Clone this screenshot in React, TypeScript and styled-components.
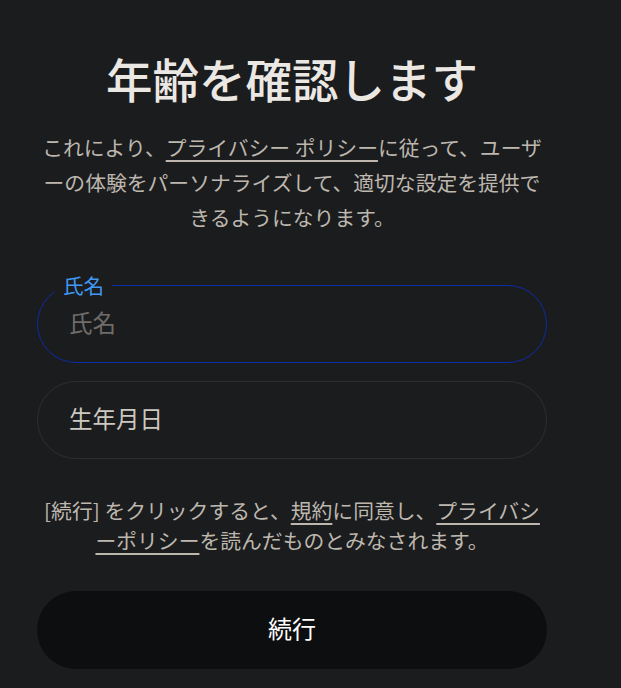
import React from 'react';
import styled, { createGlobalStyle } from 'styled-components';

const GlobalStyle = createGlobalStyle`
  html, body { margin: 0; padding: 0; background: #1b1c1e; }
  body { font-family: "Noto Sans CJK JP", "Noto Sans", sans-serif; color: #e9e6e2; }
  * { box-sizing: border-box; }
`;

const Page = styled.main`
  min-height: 688px;
  padding: 49px 0 0 37px;
`;

const Column = styled.div`
  width: 510px;
  display: flex;
  flex-direction: column;
`;

const Title = styled.h1`
  margin: 0;
  font-size: 46.5px;
  line-height: 58px;
  font-weight: 500;
  text-align: center;
  color: #ebe8e4;
`;

const Lead = styled.p<{ $lh: number; $mt: number }>`
  margin: ${p => p.$mt}px 0 0;
  font-size: 20.8px;
  line-height: ${p => p.$lh}px;
  text-align: center;
  color: #bdb7ae;
  line-break: loose;
`;

const Link = styled.a`
  color: inherit;
  text-decoration: underline;
  text-decoration-thickness: 1.5px;
  text-underline-offset: 4px;
  cursor: pointer;
`;

const Field = styled.label<{ $focused?: boolean; $mt: number }>`
  position: relative;
  display: flex;
  align-items: center;
  height: 78px;
  margin-top: ${p => p.$mt}px;
  border: 1px solid ${p => (p.$focused ? '#0d2ca6' : '#2c2e31')};
  border-radius: 39px;
`;

const FloatLabel = styled.span`
  position: absolute;
  top: -12px;
  left: 17px;
  padding: 0 8px;
  font-size: 20.6px;
  line-height: 22px;
  color: #3f98f2;
  background: #1b1c1e;
`;

const Input = styled.input<{ $strong?: boolean }>`
  width: 100%;
  height: 100%;
  padding: 0 31px 4px;
  border: none;
  outline: none;
  background: transparent;
  font-family: inherit;
  font-size: 23.5px;
  color: #d4cfc7;
  &::placeholder {
    color: ${p => (p.$strong ? '#cdc8c0' : '#6f6d6a')};
  }
`;

const Button = styled.button`
  margin-top: 36px;
  height: 78px;
  padding: 0 0 6px;
  border: none;
  border-radius: 39px;
  background: #0d0e10;
  color: #ffffff;
  font-family: inherit;
  font-size: 24px;
  cursor: pointer;
`;

export default function App() {
  return (
    <>
      <GlobalStyle />
      <Page>
        <Column>
          <Title>年齢を確認します</Title>
          <Lead $lh={35} $mt={23}>
            これにより、<Link>プライバシー ポリシー</Link>に従って、ユーザーの体験をパーソナライズして、適切な設定を提供できるようになります。
          </Lead>
          <Field $focused $mt={50}>
            <FloatLabel>氏名</FloatLabel>
            <Input placeholder="氏名" />
          </Field>
          <Field $mt={18}>
            <Input $strong placeholder="生年月日" />
          </Field>
          <Lead $lh={30} $mt={36}>
            [続行] をクリックすると、<Link>規約</Link>に同意し、<Link>プライバシーポリシー</Link>を読んだものとみなされます。
          </Lead>
          <Button>続行</Button>
        </Column>
      </Page>
    </>
  );
}
